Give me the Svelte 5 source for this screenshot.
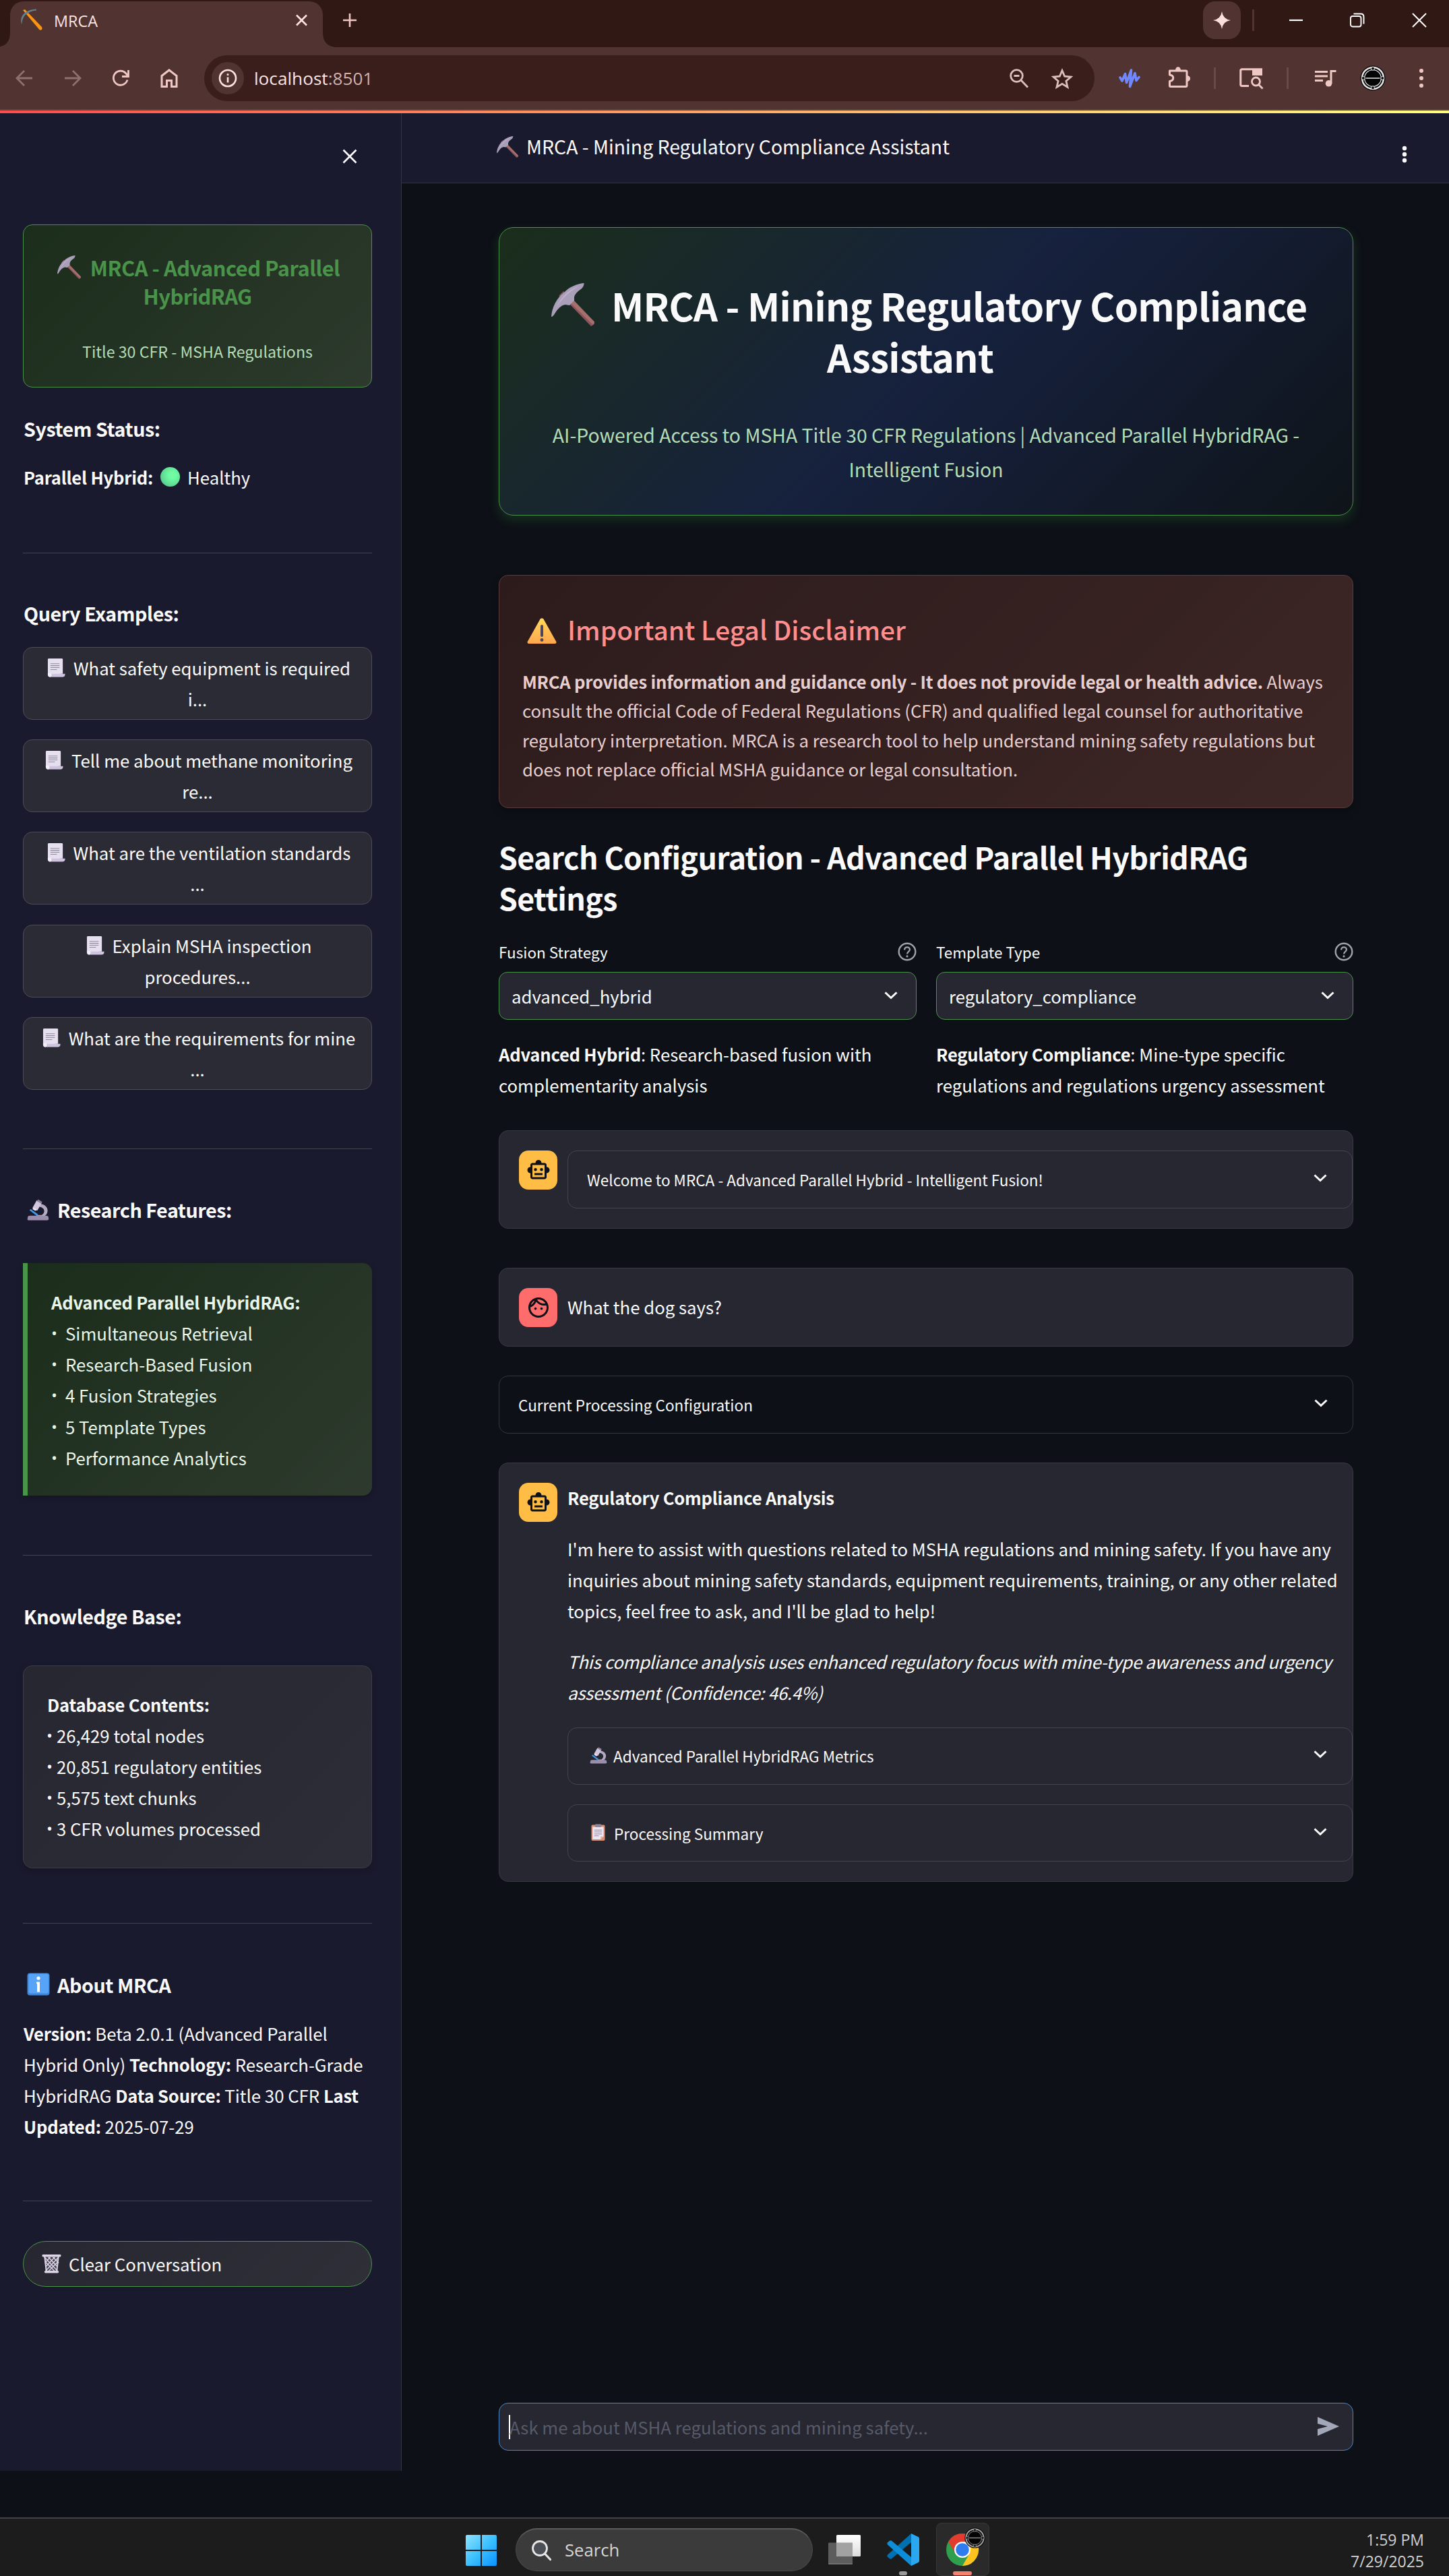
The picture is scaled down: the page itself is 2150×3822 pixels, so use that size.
<script>
  const queries = [
    ['What safety equipment is required', 'i...'],
    ['Tell me about methane monitoring', 're...'],
    ['What are the ventilation standards', '...'],
    ['Explain MSHA inspection', 'procedures...'],
    ['What are the requirements for mine', '...']
  ];
  const features = ['Simultaneous Retrieval', 'Research-Based Fusion', '4 Fusion Strategies', '5 Template Types', 'Performance Analytics'];
  const database = ['26,429 total nodes', '20,851 regulatory entities', '5,575 text chunks', '3 CFR volumes processed'];
  const settings = [
    { label: 'Fusion Strategy', value: 'advanced_hybrid', name: 'Advanced Hybrid', lines: ['Research-based fusion with', 'complementarity analysis'] },
    { label: 'Template Type', value: 'regulatory_compliance', name: 'Regulatory Compliance', lines: ['Mine-type specific', 'regulations and regulations urgency assessment'] }
  ];
</script>

{#snippet pickaxe(cls)}
  <svg class={cls} viewBox="0 0 32 32">
    <path d="M5.5 9.500 L9 6 L32 28.800 Q32.200 31 29.500 32 L13 15z" fill="#8a5560" />
    <path d="M15 11l17 17.800q0 1.500-1 2.200L13.500 14z" fill="#a56f6c" />
    <path d="M0 25C.5 18 4 11 9.500 7 13 3 19 .5 24.300 0c0 2-1 3.300-2 4.200-3 2-4.800 4-5.300 6L17 13l-3.500 3.500-3-.5C7 16.500 4.500 19.500 2.500 22.800 1.700 24.300.9 25 0 25z" fill="#a99fb8" />
    <path d="M4 18C6 12 12 5 21 2 14 6 9 10 4 18z" fill="#bdb2cb" />
  </svg>
{/snippet}

{#snippet scroll()}
  <svg class="scroll" viewBox="0 0 28 30">
    <path d="M1 25V2q0-1.500 1.500-1.500h20Q24 .5 24 2v22z" fill="#e6dff0" />
    <path d="M5 24h22.500q.5 4-3.500 5H4.500Q1 28.500 1 25z" fill="#cfc3e0" />
    <path d="M1 23h5q2 5-1.500 6Q1 28.500 1 25z" fill="#f3eef9" />
    <path d="M5 8.500h14M5 11.500h14M5 14.500h14M5 17.500h10" stroke="#8f8a9c" stroke-width="1.100" />
  </svg>
{/snippet}

{#snippet microscope(cls)}
  <svg class={cls} viewBox="0 0 32 32">
    <path d="M19 8c13 1 14 15 4 19h-9v-3h7c6-3 5-11-3-12z" fill="#b5a9c2" />
    <path d="M1 28q0-3 3-3h24q3 0 3 3 1 3-2 3.500H2Q0 31 1 28z" fill="#9a8eac" />
    <path d="M3.500 17l2-1.500L16 23l-1.500 2.500z" fill="#3f9be8" />
    <path d="M8 13.500l6-10.500 7 4-6 10.500q-4 0-7-4z" fill="#d2c7dc" />
    <path d="M16 1.500l6 3.500-1.500 2.500-6-3.500z" fill="#8b7f9b" />
    <path d="M9 13l5 3.500-2 1.500-4-2.500z" fill="#efe6fa" />
  </svg>
{/snippet}

{#snippet chevron()}
  <svg class="chev" viewBox="0 0 20 12"><path d="M1.500 1.500L10 9.500l8.500-8" fill="none" stroke="#fafafa" stroke-width="3" /></svg>
{/snippet}

{#snippet robot()}
  <div class="avatar bot">
    <svg viewBox="0 0 24 24"><path fill="#0e1117" fill-rule="evenodd" d="M20 9V7c0-1.100-.9-2-2-2h-3c0-1.660-1.340-3-3-3S9 3.340 9 5H6c-1.100 0-2 .9-2 2v2c-1.660 0-3 1.340-3 3s1.340 3 3 3v4c0 1.100.9 2 2 2h12c1.100 0 2-.9 2-2v-4c1.660 0 3-1.340 3-3s-1.340-3-3-3zm-2 10H6V7h12v12zM9 13a1.500 1.500 0 1 1 0-3 1.500 1.500 0 0 1 0 3zm6 0a1.500 1.500 0 1 1 0-3 1.500 1.500 0 0 1 0 3zM8 15h8v2H8z" /></svg>
  </div>
{/snippet}

{#snippet profile(cls, ring)}
  <svg class={cls} viewBox="0 0 40 40">
    <circle cx="20" cy="20" r="19.500" fill="#050505" />
    <circle cx="20" cy="20" r="16.800" fill="none" stroke={ring} stroke-width="2.600" />
    <circle cx="20" cy="20" r="13" fill="none" stroke={ring} stroke-width="1.200" />
    <path d="M9 20h22" stroke={ring} stroke-width="1.600" />
    <circle cx="20" cy="5" r="2.600" fill="#111" stroke={ring} /><circle cx="20" cy="35" r="2.600" fill="#111" stroke={ring} />
    <circle cx="5" cy="20" r="2.600" fill="#111" stroke={ring} /><circle cx="35" cy="20" r="2.600" fill="#111" stroke={ring} />
  </svg>
{/snippet}

<div class="screen">
  <header class="tabstrip">
    <div class="tab">
      <svg class="flare left" viewBox="0 0 20 20"><path d="M20 0v20H0Q20 20 20 0z" fill="#513431" /></svg>
      <svg class="favicon" viewBox="0 0 32 32">
        <path d="M3 2l3-1 25 26q1.500 3-1 4.500-2 .5-3-1z" fill="#fb9411" />
        <path d="M23 .5C10 1-3 8 1 23q2-14 9-16 4-4 13-4.500z" fill="#64808c" />
      </svg>
      <span class="ui tabname">MRCA</span>
      <svg class="tabclose" viewBox="0 0 17 16"><path d="M1 .5l15 15M16 .5L1 15.500" stroke="#fbe3e0" stroke-width="2.600" /></svg>
      <svg class="flare right" viewBox="0 0 20 20"><path d="M0 0v20h20Q0 20 0 0z" fill="#513431" /></svg>
    </div>
    <svg class="plus" viewBox="0 0 20 20"><path d="M10 0v20M0 10h20" stroke="#f0c8c3" stroke-width="2.600" /></svg>
    <div class="spacer"></div>
    <div class="spark"><svg viewBox="0 0 24 24"><path d="M12 0q1.500 10.500 12 12-10.500 1.500-12 12-1.500-10.500-12-12Q10.500 10.500 12 0z" fill="#fbdfdc" /></svg></div>
    <div class="vline top"></div>
    <svg class="win w1" viewBox="0 0 22 22"><path d="M1 11h20" stroke="#fff" stroke-width="2.200" /></svg>
    <svg class="win w2" viewBox="0 0 22 22"><rect x="1" y="5" width="15.500" height="15.500" rx="3" fill="none" stroke="#fff" stroke-width="1.900" /><path d="M5.500 1.500H16q4.500 0 4.500 4.500v10.500" fill="none" stroke="#fff" stroke-width="1.900" /></svg>
    <svg class="win w3" viewBox="0 0 22 22"><path d="M1 1l20 20M21 1L1 21" stroke="#fff" stroke-width="2" /></svg>
  </header>

  <div class="toolbar">
    <svg class="nav n1" viewBox="0 0 26 24"><path d="M25 12H3M13 1L2 12l11 11" fill="none" stroke="#8f706d" stroke-width="2.800" /></svg>
    <svg class="nav n2" viewBox="0 0 26 24"><path d="M1 12h22M13 1l11 11-11 11" fill="none" stroke="#8f706d" stroke-width="2.800" /></svg>
    <svg class="nav n3" viewBox="0 0 26 26"><path d="M23 15.500A10.500 10.500 0 1 1 20.500 5.500l3 3.500" fill="none" stroke="#f0c8c3" stroke-width="2.800" /><path d="M24.500 1v9.500h-9.500" fill="none" stroke="#f0c8c3" stroke-width="2.800" /></svg>
    <svg class="nav n4" viewBox="0 0 26 28"><path d="M2 10.500L13 2l11 8.500V26.500h-7.500v-9h-7v9H2z" fill="none" stroke="#f0c8c3" stroke-width="3" /></svg>
    <div class="omnibox">
      <div class="info"><svg viewBox="0 0 28 28"><circle cx="14" cy="14" r="12" fill="none" stroke="#fbe3e0" stroke-width="2.600" /><path d="M14 12.500v8M14 7.300v2.800" stroke="#fbe3e0" stroke-width="2.600" /></svg></div>
      <span class="ui url">localhost<i>:8501</i></span>
      <svg class="lens" viewBox="0 0 29 29"><circle cx="10.500" cy="10.500" r="8.800" fill="none" stroke="#dcbfbb" stroke-width="2.800" /><path d="M17 17l10 10.500M6.500 10.500h8" stroke="#dcbfbb" stroke-width="2.800" /></svg>
      <svg class="star" viewBox="0 0 32 30"><path d="M16 3.500l3.700 8.700 9.300.8-7.100 6.200 2.100 9.100-8-4.900-8 4.900 2.100-9.100L3 13l9.300-.8z" fill="none" stroke="#dcbfbb" stroke-width="2.800" /></svg>
    </div>
    <svg class="wave" viewBox="0 0 32 30"><path d="M2 14l3 5L9.500 8.500l2 13L18.500 3l-2 24.500L24 7.500l2 11 4-5" fill="none" stroke="#7088ff" stroke-width="3.600" stroke-linecap="round" stroke-linejoin="round" /></svg>
    <svg class="puzzle" viewBox="0 0 34 32"><path d="M2.500 7h24q1.500 0 1.500 1.500V29q0 1.500-1.500 1.500h-22.500Q2.500 30.500 2.500 29v-6.500c7-1 7-8.500 0-9.500V7z" fill="none" stroke="#f0c8c3" stroke-width="3" stroke-linejoin="round" /><path d="M11 6.500c0-7 8-7 8 0zM28.500 14c6 0 6 9 0 9z" fill="#f0c8c3" /></svg>
    <div class="vline v1"></div>
    <svg class="tabsearch" viewBox="0 0 36 31"><path d="M14 26.500H4Q1.800 26.500 1.800 24.500V4Q1.800 1.800 4 1.800h28.500V9" fill="none" stroke="#f0c8c3" stroke-width="3" /><path d="M19 1h13q2 0 2 2v8H19z" fill="#f0c8c3" /><circle cx="24.500" cy="20" r="6" fill="none" stroke="#f0c8c3" stroke-width="2.800" /><path d="M28.500 24.500l6 6" stroke="#f0c8c3" stroke-width="2.800" /></svg>
    <div class="vline v2"></div>
    <svg class="music" viewBox="0 0 32 25"><path d="M0 2.500h19M0 9h19M0 15.500h12M24 20V1.500h7.500" fill="none" stroke="#f0c8c3" stroke-width="3" /><circle cx="20.500" cy="19.800" r="4.800" fill="#f0c8c3" /></svg>
    {@render profile('face', '#e8e8e8')}
    <svg class="dots" viewBox="0 0 8 30"><circle cx="4" cy="4" r="3" fill="#f0c8c3" /><circle cx="4" cy="15" r="3" fill="#f0c8c3" /><circle cx="4" cy="26" r="3" fill="#f0c8c3" /></svg>
  </div>
  <div class="rainbow"></div>

  <div class="app">
    <aside>
      <div class="closerow"><svg viewBox="0 0 22 20"><path d="M1.500 .5l19 19M20.500 .5l-19 19" stroke="#fafafa" stroke-width="2.600" /></svg></div>
      <div class="logo">
        <h3>{@render pickaxe('pk-logo')}MRCA - Advanced Parallel<br />HybridRAG</h3>
        <p>Title 30 CFR - MSHA Regulations</p>
      </div>
      <h4 class="status">System Status:</h4>
      <div class="body health"><b>Parallel Hybrid:</b><span class="orb"></span>Healthy</div>
      <hr class="r1" />
      <h4 class="q">Query Examples:</h4>
      <div class="queries">
        {#each queries as q}
          <button>{@render scroll()}<span>{q[0]}</span><br />{q[1]}</button>
        {/each}
      </div>
      <hr class="r2" />
      <h4 class="rf">{@render microscope('ms-head')}Research Features:</h4>
      <div class="green body">
        <b>Advanced Parallel HybridRAG:</b>
        {#each features as f}<div class="row"><span>•</span>{f}</div>{/each}
      </div>
      <hr class="r3" />
      <h4 class="kb">Knowledge Base:</h4>
      <div class="db body">
        <b>Database Contents:</b>
        {#each database as d}<div class="row"><span>•</span>{d}</div>{/each}
      </div>
      <hr class="r4" />
      <h4 class="ab"><svg class="ifo" viewBox="0 0 34 34"><rect x=".5" y=".5" width="33" height="33" rx="4" fill="#3c86dd" /><rect x="2.500" y="1.500" width="29.500" height="29" rx="3" fill="#56a3f8" /><circle cx="17" cy="8" r="2.600" fill="#fff" /><path d="M14 13.500h5v15h-4V16h-1z" fill="#fff" /></svg>About MRCA</h4>
      <div class="body about">
        <b>Version:</b> Beta 2.0.1 (Advanced Parallel<br />Hybrid Only) <b>Technology:</b> Research-Grade<br />HybridRAG <b>Data Source:</b> Title 30 CFR <b>Last<br />Updated:</b> 2025-07-29
      </div>
      <hr class="r5" />
      <div class="clear">
        <svg viewBox="0 0 30 30"><path d="M3 4h24l-3 24H6z" fill="#4a4656" /><path d="M4 5l20 21M10 5l14 15M17 5l9 9M26 5L6 26M20 5L6 20M13 5l-8 9M10 27l14-14M20 27L5 12" stroke="#ddd6e8" stroke-width="1.500" /><path d="M4.500 4l2.500 23h16l2.500-23" fill="none" stroke="#ddd6e8" stroke-width="2" /><rect x=".5" y="1" width="29" height="3.600" rx="1.500" fill="#ddd6e8" /><rect x="4" y="26" width="22" height="3.500" rx="1.500" fill="#ddd6e8" /></svg>
        Clear Conversation
      </div>
    </aside>

    <main>
      <div class="topbar">
        {@render pickaxe('pk-top')}<span>MRCA - Mining Regulatory Compliance Assistant</span>
        <svg class="menu" viewBox="0 0 8 26"><circle cx="4" cy="4" r="3.200" fill="#fafafa" /><circle cx="4" cy="13" r="3.200" fill="#fafafa" /><circle cx="4" cy="22" r="3.200" fill="#fafafa" /></svg>
      </div>
      <div class="col">
        <section class="hero">
          <h1><span class="l1">{@render pickaxe('pk-hero')}MRCA - Mining Regulatory Compliance</span><span class="l2">Assistant</span></h1>
          <p>AI-Powered Access to MSHA Title 30 CFR Regulations | Advanced Parallel HybridRAG -<br />Intelligent Fusion</p>
        </section>
        <section class="legal">
          <h3><svg viewBox="0 0 44 38"><defs><linearGradient id="warn" x1="0" y1="0" x2="0" y2="1"><stop offset="0" stop-color="#ffd95c" /><stop offset="1" stop-color="#ffa64d" /></linearGradient></defs><path d="M19.500 1.500q2.500-2.500 5 0l19 34q0 2.500-2.500 2.500H3q-2.500 0-2.500-2.500z" fill="url(#warn)" /><rect x="20" y="10" width="4" height="18" rx="2" fill="#4c4560" /><circle cx="22" cy="32.500" r="2.400" fill="#4c4560" /></svg>Important Legal Disclaimer</h3>
          <p class="body"><b>MRCA provides information and guidance only - It does not provide legal or health advice.</b> Always<br />consult the official Code of Federal Regulations (CFR) and qualified legal counsel for authoritative<br />regulatory interpretation. MRCA is a research tool to help understand mining safety regulations but<br />does not replace official MSHA guidance or legal consultation.</p>
        </section>
        <h2>Search Configuration - Advanced Parallel HybridRAG<br />Settings</h2>
        <div class="settings">
          {#each settings as s}
            <div>
              <div class="label">{s.label}<svg viewBox="0 0 28 28"><circle cx="14" cy="14" r="12.300" fill="none" stroke="#a0a3a8" stroke-width="2.400" /><path d="M10 11.300q.3-4 4-4t4 3.500c0 3-4 3.200-4 6.700" fill="none" stroke="#a0a3a8" stroke-width="2.200" /><circle cx="14" cy="20.800" r="1.600" fill="#a0a3a8" /></svg></div>
              <div class="select">{s.value}{@render chevron()}</div>
              <p class="body"><b>{s.name}</b>: {s.lines[0]}<br />{s.lines[1]}</p>
            </div>
          {/each}
        </div>
        <section class="chat c1">
          {@render robot()}
          <div class="content"><div class="exp">Welcome to MRCA - Advanced Parallel Hybrid - Intelligent Fusion!{@render chevron()}</div></div>
        </section>
        <section class="chat c2">
          <div class="avatar user"><svg viewBox="0 0 24 24"><path fill="#0e1117" fill-rule="evenodd" d="M10.250 13c0 .69-.56 1.250-1.250 1.250S7.750 13.690 7.750 13s.56-1.250 1.250-1.250 1.250.56 1.250 1.250zM15 11.750c-.69 0-1.250.56-1.250 1.250s.56 1.250 1.250 1.250 1.250-.56 1.250-1.250-.56-1.250-1.250-1.250zm7 .25c0 5.520-4.480 10-10 10S2 17.520 2 12 6.480 2 12 2s10 4.480 10 10zM10.660 4.120C12.060 6.440 14.600 8 17.500 8c.46 0 .91-.05 1.340-.12C17.440 5.560 14.900 4 12 4c-.46 0-.91.05-1.340.12zM4.420 9.470c1.710-.97 3.030-2.550 3.660-4.440C6.370 6 5.050 7.580 4.420 9.470zM20 12c0-.78-.12-1.530-.33-2.240-.7.15-1.420.24-2.170.24-3.130 0-5.920-1.440-7.760-3.690C8.690 8.870 6.600 10.880 4 11.860c.01.04 0 .09 0 .14 0 4.410 3.590 8 8 8s8-3.590 8-8z" /></svg></div>
          <div class="content body">What the dog says?</div>
        </section>
        <div class="exp outer">Current Processing Configuration{@render chevron()}</div>
        <section class="chat c3">
          {@render robot()}
          <div class="content body">
            <b>Regulatory Compliance Analysis</b>
            <p class="ans">I'm here to assist with questions related to MSHA regulations and mining safety. If you have any<br />inquiries about mining safety standards, equipment requirements, training, or any other related<br />topics, feel free to ask, and I'll be glad to help!</p>
            <p class="note">This compliance analysis uses enhanced regulatory focus with mine-type awareness and urgency<br />assessment (Confidence: 46.4%)</p>
            <div class="exp ico">{@render microscope('ms-exp')}Advanced Parallel HybridRAG Metrics{@render chevron()}</div>
            <div class="exp ico second"><svg class="clip" viewBox="0 0 22 26"><rect x=".5" y="1" width="21" height="24.500" rx="2" fill="#d68f75" /><path d="M2.500 4h17v15l-4.500 4.500H2.500z" fill="#ece5f2" /><path d="M19.500 19l-4.500 4.500V19z" fill="#f6a98f" /><rect x="6" y="0" width="10" height="4.500" rx="1.500" fill="#8f8799" /><path d="M5 9h12M5 12h12M5 15h12M5 18h7" stroke="#8f8799" stroke-width="1.100" /></svg>Processing Summary{@render chevron()}</div>
          </div>
        </section>
        <div class="ask"><span class="caret"></span>Ask me about MSHA regulations and mining safety...<svg viewBox="0 0 32 28"><path d="M0 0L32 14 0 28V18l15-4L0 10z" fill="#a3a8b8" /></svg></div>
      </div>
    </main>
  </div>

  <footer>
    <svg class="winlogo" viewBox="0 0 46 46"><defs><linearGradient id="wg" x1="0" y1="0" x2="1" y2="1"><stop offset="0" stop-color="#8fe3ff" /><stop offset=".5" stop-color="#3cc0ff" /><stop offset="1" stop-color="#0a93ff" /></linearGradient></defs><path d="M2 0h20v22H0V2q0-2 2-2zM24 0h20q2 0 2 2v20H24zM0 24h22v22H2q-2 0-2-2zM24 24h22v20q0 2-2 2H24z" fill="url(#wg)" /></svg>
    <div class="find"><svg viewBox="0 0 30 30"><circle cx="13" cy="12" r="10.500" fill="#4a5055" stroke="#e6e6e6" stroke-width="2.800" /><path d="M20.500 20l8 8.500" stroke="#e6e6e6" stroke-width="3.200" stroke-linecap="round" /></svg>Search</div>
    <svg class="taskview" viewBox="0 0 48 46"><defs><linearGradient id="tv" x1="0" y1="0" x2="0" y2="1"><stop offset="0" stop-color="#fff" /><stop offset="1" stop-color="#dcdcdc" /></linearGradient></defs><rect x="0" y="12.500" width="36" height="32" rx="1.500" fill="#5d5d5d" /><rect x="0" y="43" width="36" height="1.800" rx=".9" fill="#747474" /><rect x="12" y="1" width="36" height="32" rx="1.500" fill="url(#tv)" /><path d="M12 12.500h24V33H13.500Q12 33 12 31.500z" fill="#a2a2a2" /></svg>
    <div class="task">
      <svg class="code" viewBox="0 0 48 48"><path d="M36 0L1 31.500q-1.500 1.700 0 3.300l3 2.500q1.300 1 3 0L36 13z" fill="#0070b0" /><path d="M36 48L1 16.500q-1.500-1.700 0-3.300l3-2.500q1.300-1 3 0L36 35z" fill="#0e8ed8" /><path d="M36 0l10.500 5q1.500.8 1.500 2.500v33q0 1.700-1.500 2.500L36 48z" fill="#2ba7f0" /></svg>
      <span class="dot"></span>
    </div>
    <div class="task active">
      <svg class="chrome" viewBox="0 0 48 48"><circle cx="24" cy="24" r="24" fill="#2f9f4d" /><path d="M3.200 12A24 24 0 0 1 44.800 12H24L13.600 30z" fill="#e33b2e" /><path d="M44.800 12A24 24 0 0 1 24 48L34.400 30 24 12z" fill="#fcc31e" /><circle cx="24" cy="24" r="12" fill="#fff" /><circle cx="24" cy="24" r="9.800" fill="#2f7cf0" /></svg>
      {@render profile('badge', '#a0a0a0')}
      <span class="bar"></span>
    </div>
    <div class="clock">1:59 PM<br />7/29/2025</div>
  </footer>
</div>

<style>
  :global(body) { background: #0e1117; }
  .screen { width: 2150px; height: 3822px; display: flex; flex-direction: column; overflow: hidden; background: #0d1117; color: #fafafa; font-family: "Noto Sans CJK SC", "Noto Sans", sans-serif; font-size: 25.75px; line-height: 46px; white-space: nowrap; }
  .screen *, .screen { box-sizing: border-box; }
  svg { display: block; flex: none; overflow: visible; }
  h1, h2, h3, h4, p, hr { margin: 0; border: 0; font-weight: 400; }
  b { font-weight: 700; font-size: 25.600px; letter-spacing: -0.0092em; line-height: 1; }
  .ui { font-family: "Open Sans", sans-serif; }

  .tabstrip { flex: none; height: 70px; background: #301814; display: flex; align-items: flex-start; }
  .tab { position: relative; margin: 2px 0 0 15px; width: 464px; height: 68px; background: #513431; border-radius: 20px 20px 0 0; display: flex; }
  .flare { position: absolute; bottom: 0; width: 22px; height: 22px; }
  .left { left: -22px; } .right { right: -22px; }
  .favicon { width: 32px; height: 32px; margin: 11px 0 0 16px; }
  .tabname { margin: 6px 0 0 17px; width: 359px; font-size: 23.400px; color: #fbe3e0; }
  .tabclose { width: 17px; height: 16px; margin-top: 20px; }
  .plus { width: 20px; height: 20px; margin: 20px 0 0 30px; }
  .spacer { flex: 1; }
  .spark { width: 56px; height: 56px; border-radius: 18px; background: #513431; margin-top: 2px; padding: 15px; }
  .spark svg { width: 26px; height: 26px; }
  .vline { width: 3px; height: 32px; background: #6b4a46; }
  .vline.top { margin: 14px 51px 0 17px; background: #513431; }
  .win { width: 22px; height: 22px; margin-top: 19px; }
  .w1 { margin-right: 69px; } .w2 { margin-right: 70px; } .w3 { margin-right: 33px; }

  .toolbar { flex: none; height: 94px; background: #513431; border-bottom: 2px solid #5b4641; display: flex; align-items: center; padding-left: 23px; }
  .n1, .n2 { width: 26px; height: 24px; } .n3 { width: 26px; height: 26px; } .n4 { width: 26px; height: 28px; }
  .n1 { margin-right: 46px; } .n2 { margin-right: 45px; } .n3 { margin-right: 46px; } .n4 { margin-right: 39px; }
  .omnibox { width: 1321px; height: 68px; border-radius: 34px; background: #391e1b; display: flex; align-items: center; padding-left: 11px; }
  .info { width: 48px; height: 48px; border-radius: 50%; background: #513431; display: grid; place-items: center; }
  .info svg { width: 28px; height: 28px; }
  .url { width: 1121px; margin-left: 15px; font-size: 26.200px; color: #fbe3e0; }
  .url i { font-style: normal; color: #d0b0ac; }
  .lens { width: 29px; height: 29px; } .star { width: 32px; height: 30px; margin-left: 33px; }
  .wave { width: 32px; height: 30px; margin-left: 36px; }
  .puzzle { width: 34px; height: 32px; margin: 0 34px 4px 41px; }
  .tabsearch { width: 36px; height: 31px; margin: 0 34px 0 35px; }
  .music { width: 32px; height: 25px; margin: 0 35px 0 39px; }
  .face { width: 38px; height: 38px; margin-right: 49px; } .dots { width: 8px; height: 30px; }
  .rainbow { flex: none; height: 4px; background: linear-gradient(90deg, #ff4b4b, #ff8a5c 35%, #ffb06a 55%, #fffd80); }

  .app { flex: 1; display: flex; min-height: 0; }
  aside { width: 596px; height: 3498px; background: #1a1a2e; border-right: 1px solid #33343f; padding: 0 43px 0 34px; flex: none; }
  .closerow { height: 165px; padding: 54px 22px 0 0; display: flex; justify-content: flex-end; }
  .closerow svg { width: 22px; height: 20px; }
  .logo { height: 242px; border: 1px solid #4a8f4a; border-radius: 14px; background: linear-gradient(135deg, #1b2d1b, #2d3a2d); text-align: center; padding-top: 41.700px; }
  .logo h3 { font-size: 30.800px; font-weight: 700; line-height: 42px; letter-spacing: -0.016em; color: #4a934a; }
  .logo p { font-size: 23.200px; line-height: 41px; margin-top: 41.700px; color: #b4dcb5; }
  .pk-logo { display: inline-block; width: 35px; height: 35px; margin: -6px 14px 0 3px; vertical-align: -4px; }
  h4 { height: 38px; font-size: 28.700px; font-weight: 700; line-height: 38px; letter-spacing: -0.016em; padding-left: 1px; }
  .status { margin-top: 41.500px; }
  .health { margin-top: 30.300px; display: flex; align-items: center; padding-left: 1px; }
  .orb { width: 29px; height: 29px; border-radius: 50%; margin: -1px 11px 0 11px; background: radial-gradient(circle at 62% 42%, #70fba3 20%, #5fdc94 60%, #57a394); }
  hr { height: 1px; background: #42444f; }
  .r1 { margin-top: 88.800px; } .q { margin-top: 70.500px; }
  .queries { margin-top: 31px; display: flex; flex-direction: column; gap: 29.200px; }
  button { appearance: none; display: block; width: 100%; height: 108px; margin: 0; padding: 0; border: 1px solid #4b4c55; border-radius: 14px; background: #2b2b35; color: #fafafa; font: inherit; line-height: 46px; text-align: center; }
  .scroll { display: inline-block; width: 27px; height: 30px; margin: -4px 12px 0 4px; vertical-align: -4px; }
  .r2 { margin-top: 87.300px; }
  .rf { margin-top: 70.600px; display: flex; align-items: center; }
  .ms-head { width: 35px; height: 33px; margin: 0 11px 0 4px; }
  .green { height: 345px; margin-top: 60px; border-left: 7px solid #4a934a; border-radius: 0 14px 14px 0; background: linear-gradient(135deg, #1b2d1b, #2d3a2d); padding: 35px 0 0 35px; line-height: 46.200px; color: #e8f5e9; box-shadow: 0 4px 10px rgba(0,0,0,.2); }
  .green b, .db b, .content > b { display: block; line-height: inherit; }
  .row { display: flex; } .row span { font-family: "Open Sans", sans-serif; font-size: 24px; height: 46px; line-height: 46px; }
  .green .row span { width: 21px; } .db .row span { width: 15px; margin-left: -1px; }
  .r3 { margin-top: 88.400px; } .kb { margin-top: 71.300px; }
  .db { height: 301px; margin-top: 53.500px; border: 1px solid #3c3d48; border-radius: 14px; background: linear-gradient(135deg, #262730, #2d2d38); padding: 34.200px 0 0 35px; box-shadow: 0 4px 10px rgba(0,0,0,.2); }
  .r4 { margin-top: 81.200px; }
  .ab { margin-top: 71.500px; display: flex; align-items: center; }
  .ifo { width: 34px; height: 34px; margin: -2px 11px 0 5px; }
  .about { margin-top: 30.500px; height: 184px; padding-left: 1px; }
  .r5 { margin-top: 87.200px; }
  .clear { margin-top: 58.400px; height: 68px; border: 1px solid #4a934a; border-radius: 34px; background: linear-gradient(135deg, #262730, #2f2f38); display: flex; align-items: center; padding-left: 27px; }
  .clear svg { width: 29px; height: 29px; margin-right: 11px; }

  main { flex: 1; height: 3567px; display: flex; flex-direction: column; }
  .topbar { flex: none; height: 104px; background: #1a1a2e; border-bottom: 1px solid #32343c; display: flex; padding-left: 141px; }
  .topbar span { font-size: 28.370px; margin-top: 26px; flex: 1; }
  .pk-top { width: 32px; height: 32px; margin: 34px 12px 0 0; }
  .menu { width: 8px; height: 26px; margin: 48px 62px 0 0; }
  .col { width: 1268px; margin-left: 144px; flex: 1; display: flex; flex-direction: column; }
  .hero { height: 428px; margin-top: 65px; flex: none; border: 1px solid #4a8f4a; border-radius: 22px; background: linear-gradient(135deg, #1b2e1b 0%, #16213e 50%, #0f1419 100%); box-shadow: 0 7px 15px rgba(46,110,50,.32); padding-top: 76px; text-align: center; }
  h1 { font-size: 56.600px; line-height: 76.200px; font-weight: 700; letter-spacing: -0.0125em; text-align: left; }
  h1 span { display: flex; align-items: center; } .l1 { padding-left: 77px; } .l2 { padding-left: 486px; }
  .pk-hero { width: 64px; height: 64px; margin: -1px 25px 0 0; }
  .hero p { margin-top: 53.500px; font-size: 28.370px; line-height: 50.700px; color: #b4dcb5; }
  .legal { height: 346px; margin-top: 88px; flex: none; border: 1px solid #5a3a3a; border-radius: 14px; background: linear-gradient(135deg, #2d1b1b, #3d2626); padding: 54.300px 0 0 34px; box-shadow: 0 6px 12px rgba(0,0,0,.3); }
  .legal h3 { font-size: 38.860px; font-weight: 500; line-height: 51.800px; color: #ff8f8f; display: flex; align-items: center; }
  .legal h3 svg { width: 44px; height: 38px; margin: 4px 16px 0 7px; }
  .legal p { line-height: 43.200px; margin-top: 29px; color: #e8cfcf; }
  h2 { margin-top: 41px; font-size: 44.700px; font-weight: 700; line-height: 61px; letter-spacing: -0.0143em; }
  .settings { margin-top: 30.400px; display: grid; grid-template-columns: 620px 619px; justify-content: space-between; }
  .label { height: 40px; line-height: 40px; font-size: 22.500px; display: flex; justify-content: space-between; align-items: center; }
  .label svg { width: 28px; height: 28px; }
  .select { height: 71px; margin-top: 10px; border: 1px solid #4a934a; border-radius: 13px; background: #262730; display: flex; justify-content: space-between; align-items: center; padding: 0 27px 0 18px; }
  .chev { width: 20px; height: 12px; margin-top: -2px; }
  .settings p { margin-top: 28px; height: 92px; }
  .chat { position: relative; flex: none; border: 1px solid #383943; border-radius: 14px; background: #262730; display: flex; padding-left: 29px; }
  .avatar { width: 57px; height: 58px; border-radius: 14px; display: grid; place-items: center; flex: none; margin-top: 29px; }
  .avatar svg { width: 36px; height: 36px; } .bot { background: #ffbd45; } .user { background: #ff6c6c; }
  .content { flex: 1; margin-left: 15px; }
  .c1 { height: 146px; margin-top: 44px; } .c1 .content { padding-top: 29px; }
  .exp { height: 85.400px; border: 1px solid #43444e; border-radius: 14px; font-size: 22.550px; display: flex; align-items: center; padding: 0 37px 0 28px; }
  .exp .chev { margin: -4px 0 0 auto; }
  .c2 { height: 117px; margin-top: 57.600px; } .c2 .content { padding-top: 34px; }
  .outer { flex: none; margin-top: 43.400px; border-color: #32353c; }
  .c3 { height: 621.400px; margin-top: 43.400px; } .c3 .content { padding-top: 27.600px; }
  .ans { margin-top: 30px; line-height: 46.100px; }
  .note { margin: 28.500px 0 29px; font-style: italic; letter-spacing: -0.0098em; }
  .exp.ico { padding-left: 32px; } .second { margin-top: 29px; }
  .ms-exp { width: 26px; height: 26px; margin: -2px 9px 0 0; } .clip { width: 21px; height: 26px; margin: -2px 13px 0 2px; }
  .ask { flex: none; height: 71px; margin-top: auto; margin-bottom: 99px; border: 1px solid #4a86c8; border-radius: 14px; background: #262730; color: #575a68; display: flex; align-items: center; padding: 0 20px 0 14px; }
  .caret { width: 2px; height: 36px; background: #fff; margin-right: -1px; }
  .ask svg { width: 32px; height: 28px; margin: -2px 0 0 auto; }

  footer { flex: none; height: 87px; background: #1c1c1c; border-top: 2px solid #434343; display: flex; align-items: flex-start; padding-left: 691px; font-family: "Open Sans", sans-serif; }
  .winlogo { width: 46px; height: 46px; margin-top: 24px; }
  .find { width: 441px; height: 64px; margin: 14px 0 0 28px; border-radius: 32px; background: #3b3b3b; border: 1px solid #4a4a4a; border-top: 2px solid #5a5a5a; display: flex; align-items: center; font-size: 25.700px; color: #d6d6d6; }
  .find svg { width: 30px; height: 30px; margin: 0 20px 0 22px; }
  .taskview { width: 48px; height: 46px; margin: 23px 0 0 23px; }
  .task { position: relative; width: 73px; height: 79px; margin: 6px 0 0 19px; }
  .code, .chrome { width: 48px; height: 48px; margin: 16px 0 0 20px; }
  .task.active { width: 79px; margin-left: 20px; background: #2a2a2a; border: 1px solid #363636; border-radius: 8px; }
  .chrome { margin: 15px 0 0 14px; }
  .dot { position: absolute; left: 38px; bottom: 1px; width: 12px; height: 6px; border-radius: 3px; background: #9a9a9a; }
  .badge { position: absolute; left: 41px; top: 6px; width: 31px; height: 31px; }
  .bar { position: absolute; left: 24px; bottom: 0; width: 28px; height: 6px; border-radius: 3px; background: #f5826e; }
  .clock { margin: 15px 37px 0 auto; text-align: right; font-size: 23px; line-height: 32px; color: #d0d0d0; }
</style>
